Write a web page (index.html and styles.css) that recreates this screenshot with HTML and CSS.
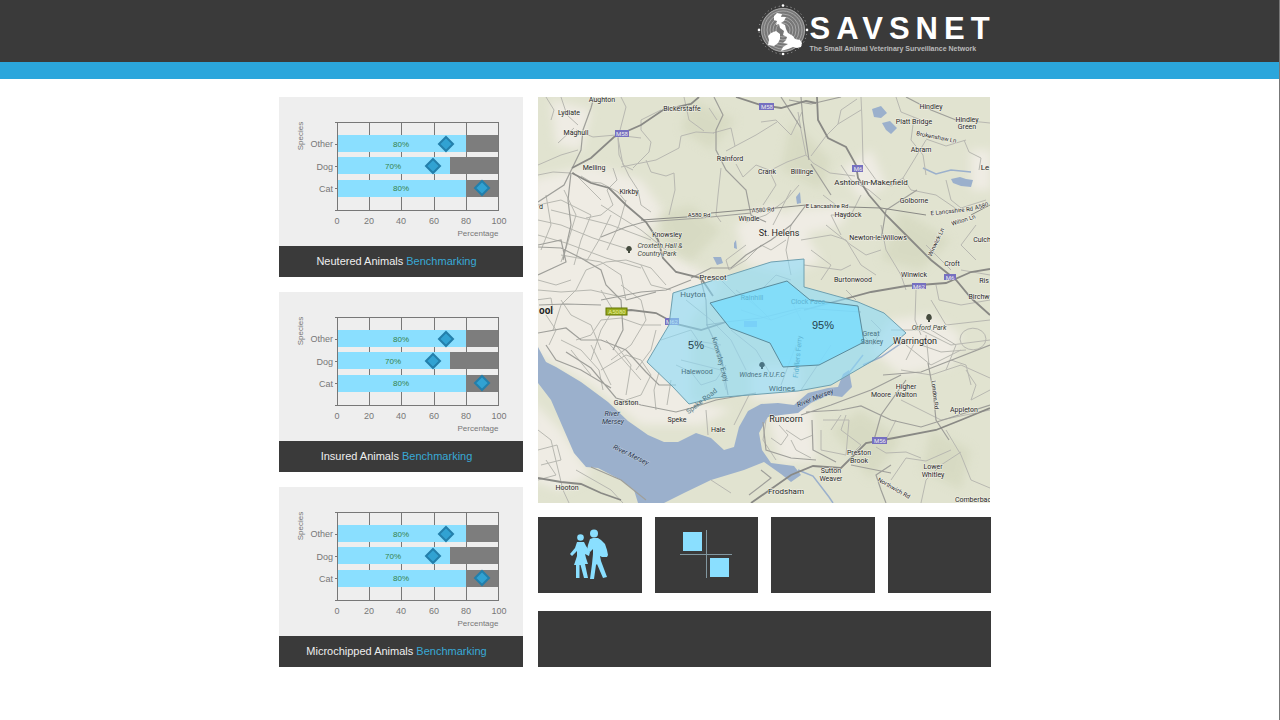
FILE: index.html
```html
<!DOCTYPE html>
<html lang="en">
<head>
<meta charset="utf-8">
<meta name="viewport" content="width=device-width, initial-scale=1">
<title>SAVSNET</title>
<link rel="stylesheet" href="styles.css">
</head>
<body>
<header class="site-header">
  <div class="wrap brand">
    <svg class="brand-mark" viewBox="0 0 52 52" aria-hidden="true">
      <circle cx="26" cy="26" r="22" fill="#777"/>
      <g fill="none" stroke="#a8a8a8" stroke-width="1">
        <circle cx="26" cy="26" r="21.500"/><circle cx="26" cy="26" r="19"/><circle cx="26" cy="26" r="16"/><circle cx="26" cy="26" r="13"/><circle cx="26" cy="26" r="10"/><circle cx="26" cy="26" r="7"/>
      </g>
      <circle cx="26" cy="26" r="24" fill="none" stroke="#aaa" stroke-width="1" stroke-dasharray="1 3"/>
      <g fill="#fff"><circle cx="26" cy="1.500" r="1.300"/><circle cx="26" cy="50" r="1.300"/><circle cx="2" cy="26" r="1.300"/><circle cx="50" cy="26" r="1.300"/></g>
      <path fill="#fff" d="M17 12l3-3 5 1-1 3 5 0-2 4-3 2 4 2 1 4 2 4 5 3 2 3 5 1 2 3-1 4-4 1-4-1-5 2-7 2 2-4 5-3-5-1 3-3 1-3-4-2 1-4-4-3-1-4-3 1 1-4-3-1zM14 29l5-2 4 3 0 5-2 4-4 3-6-1 1-5-1-4z"/>
    </svg>
    <div class="brand-text">
      <div class="brand-name">SAVSNET</div>
      <div class="brand-tag">The Small Animal Veterinary Surveillance Network</div>
    </div>
  </div>
</header>
<div class="accent"></div>
<main class="wrap board">
  <div class="charts">
    <section class="card">
      <svg class="chart" viewBox="0 0 244 149" role="img" aria-label="Neutered animals by species">
        <g class="grid"><path d="M58.500 25V114M90.500 25V114M122.500 25V114M155.500 25V114M187.500 25V114M219.500 25V114M56 25.500H219M56 47.500H58M56 69.500H58M56 91.500H58M56 113.500H219"/></g>
        <g class="rest"><path d="M187 38h32v17h-32zM171 60h48v17h-48zM187 83h32v17h-32z"/></g>
        <g class="bar"><path d="M59 38h128v17H59zM59 60h112v17H59zM59 83h128v17H59z"/></g>
        <g class="mark"><path d="M167 40l7 7-7 7-7-7zM154 62l7 7-7 7-7-7zM203 84l7 7-7 7-7-7z"/></g>
        <g class="value"><text x="122" y="50">80%</text><text x="114" y="72">70%</text><text x="122" y="94">80%</text></g>
        <g class="cat"><text x="54" y="50">Other</text><text x="54" y="73">Dog</text><text x="54" y="95">Cat</text></g>
        <g class="tick"><text x="58" y="127">0</text><text x="90" y="127">20</text><text x="122" y="127">40</text><text x="155" y="127">60</text><text x="187" y="127">80</text><text x="220" y="127">100</text></g>
        <text class="axis" x="199" y="139">Percentage</text>
        <text class="axis" transform="translate(24 39) rotate(-90)">Species</text>
      </svg>
      <h2 class="caption">Neutered Animals <span>Benchmarking</span></h2>
    </section>
    <section class="card">
      <svg class="chart" viewBox="0 0 244 149" role="img" aria-label="Insured animals by species">
        <g class="grid"><path d="M58.500 25V114M90.500 25V114M122.500 25V114M155.500 25V114M187.500 25V114M219.500 25V114M56 25.500H219M56 47.500H58M56 69.500H58M56 91.500H58M56 113.500H219"/></g>
        <g class="rest"><path d="M187 38h32v17h-32zM171 60h48v17h-48zM187 83h32v17h-32z"/></g>
        <g class="bar"><path d="M59 38h128v17H59zM59 60h112v17H59zM59 83h128v17H59z"/></g>
        <g class="mark"><path d="M167 40l7 7-7 7-7-7zM154 62l7 7-7 7-7-7zM203 84l7 7-7 7-7-7z"/></g>
        <g class="value"><text x="122" y="50">80%</text><text x="114" y="72">70%</text><text x="122" y="94">80%</text></g>
        <g class="cat"><text x="54" y="50">Other</text><text x="54" y="73">Dog</text><text x="54" y="95">Cat</text></g>
        <g class="tick"><text x="58" y="127">0</text><text x="90" y="127">20</text><text x="122" y="127">40</text><text x="155" y="127">60</text><text x="187" y="127">80</text><text x="220" y="127">100</text></g>
        <text class="axis" x="199" y="139">Percentage</text>
        <text class="axis" transform="translate(24 39) rotate(-90)">Species</text>
      </svg>
      <h2 class="caption">Insured Animals <span>Benchmarking</span></h2>
    </section>
    <section class="card">
      <svg class="chart" viewBox="0 0 244 149" role="img" aria-label="Microchipped animals by species">
        <g class="grid"><path d="M58.500 25V114M90.500 25V114M122.500 25V114M155.500 25V114M187.500 25V114M219.500 25V114M56 25.500H219M56 47.500H58M56 69.500H58M56 91.500H58M56 113.500H219"/></g>
        <g class="rest"><path d="M187 38h32v17h-32zM171 60h48v17h-48zM187 83h32v17h-32z"/></g>
        <g class="bar"><path d="M59 38h128v17H59zM59 60h112v17H59zM59 83h128v17H59z"/></g>
        <g class="mark"><path d="M167 40l7 7-7 7-7-7zM154 62l7 7-7 7-7-7zM203 84l7 7-7 7-7-7z"/></g>
        <g class="value"><text x="122" y="50">80%</text><text x="114" y="72">70%</text><text x="122" y="94">80%</text></g>
        <g class="cat"><text x="54" y="50">Other</text><text x="54" y="73">Dog</text><text x="54" y="95">Cat</text></g>
        <g class="tick"><text x="58" y="127">0</text><text x="90" y="127">20</text><text x="122" y="127">40</text><text x="155" y="127">60</text><text x="187" y="127">80</text><text x="220" y="127">100</text></g>
        <text class="axis" x="199" y="139">Percentage</text>
        <text class="axis" transform="translate(24 39) rotate(-90)">Species</text>
      </svg>
      <h2 class="caption">Microchipped Animals <span>Benchmarking</span></h2>
    </section>
  </div>
  <div class="side">
    <svg class="map" viewBox="537 97 452 406" preserveAspectRatio="xMidYMid slice" role="img" aria-label="Map of Merseyside">
      <defs>
        <filter id="soft" x="-20%" y="-20%" width="140%" height="140%"><feGaussianBlur stdDeviation="5"/></filter>
      </defs>
      <rect x="530" y="90" width="466" height="420" fill="#e1e3d0"/>
      <!-- built-up areas -->
      <g fill="#efece4" filter="url(#soft)">
        <path d="M530 180L590 165 640 180 665 215 640 240 690 265 720 285 690 320 690 400 730 410 700 425 640 425 590 385 530 350z"/>
        <path d="M735 225L770 205 800 225 820 260 790 275 745 265z"/>
        <path d="M840 170L870 150 885 185 860 200zM890 320L930 315 960 335 950 365 900 375 870 350z"/>
        <path d="M765 410L810 405 815 460 780 462zM530 400L560 430 590 475 560 490 530 480zM550 100L590 110 580 150 555 145zM970 150h20v40h-20zM785 210L850 205 840 225 800 235zM750 365h50v35h-50z"/>
      </g>
      <g fill="#cfd3b7" opacity=".5" filter="url(#soft)">
        <path d="M655 215L690 205 720 230 690 262 670 250zM690 100L735 120 710 150 680 130zM790 120L830 160 820 190 780 170zM900 210L950 240 920 270 880 260zM830 430L860 410 900 440 870 480zM930 430L970 450 960 490 920 470z"/>
      </g>
      <!-- rivers and lakes -->
      <g fill="#9bb0cc">
        <path d="M537 347L545 362 555 367 580 382 607 402 627 421 647 435 663 442 677 442 695 433 710 438 723 450 733 447 738 427 747 411 760 404 777 403 793 405 807 393 827 388 837 387 842 374 848 370 851 387 841 397 827 395 810 403 797 413 780 415 767 417 758 433 761 450 770 463 793 466 800 475 790 482 780 474 763 462 743 470 710 480 683 493 663 503 637 503 633 490 620 480 597 468 585 467 573 453 563 430 550 400 537 383z"/>
        <path d="M871 109l9-3 6 7-6 5-7-1zM881 123l8-2 7 7-6 6-5-4zM950 179l9-2 6 2 7 1-2 7-10-1-8-3zM795 197l4-5 1 11-4 1zM712 257l8 0 2 6-6 2zM733 243l2-3 1 9-3-1z"/>
      </g>
      <path d="M862 355L848 373M797 470L812 476 828 497 832 503M905 340L880 357 862 365M922 168L935 174 950 170 970 172" fill="none" stroke="#9bb0cc" stroke-width="1.500"/>
      <!-- local streets -->
      <g fill="none" stroke="#b8b8b1" stroke-width="1">
        <path d="M545 97L553 110 550 120M560 97L566 115 577 125M573 128L557 143M620 97L625 107 617 138 622 165 632 170M632 168L648 152 650 142 640 130 640 120 660 110M575 130L592 137 615 135 640 138M617 138L618 155 628 176 637 190 640 205 650 212M620 167L655 160 678 148 680 136 695 132 713 133M683 97L688 120 703 131M708 108L716 120M712 133L730 128 734 146M725 151L755 135 776 122M645 160L650 172 665 176 673 173 674 190 668 215M720 168L717 195 715 215 720 222M735 164L742 177 755 165 768 170M768 170L775 185 762 205M612 168L616 180 606 190 612 205 600 215 585 218M572 172L590 190 600 200M537 175L552 172 570 173M537 165L560 155 577 150M580 176L590 182 600 183 617 192 625 202"/>
        <path d="M760 122L775 120 790 135 801 112M797 112L800 130 805 155 812 163 829 173 854 176M810 156L825 136 837 124 860 110M837 124L840 110 856 99M860 97L861 120 862 162M862 162L875 180 890 186 902 178 913 160 925 140M895 97L900 112 920 120M913 117L910 140 922 155 925 175M925 139L945 146 965 140M960 120L989 123M963 140L968 152 980 158 978 170M902 178L910 190 935 195 957 210M945 180L950 200 960 208 985 200M840 165L850 180 868 190 880 200M790 190L772 225M822 195L835 205M805 155L786 162 770 170M798 185L785 200 765 215 745 222M860 195L850 215 830 215 840 235"/>
        <path d="M537 205L560 200 590 215M545 195L550 225 540 250M563 190L575 215 566 245 560 262M590 215L580 240 573 265M610 215L598 240 585 262M625 200L618 225 606 250M537 220L560 225 592 238 630 250M537 235L565 243 605 258 640 268M550 210L610 225 650 240M600 205L640 230 665 250M560 255L600 262 620 275 625 300M575 290L585 270 605 262 625 260 650 268 665 285M552 330L560 305 575 290M560 300L570 315 590 325 600 350M537 290L560 292 590 290 625 298M537 280L555 285 570 280M600 290L612 310 600 330 590 360M620 285L640 300 645 320 630 345 610 360M640 265L650 285 670 290M575 340L590 335 600 320 620 318 640 325 660 325M545 315L555 330 548 345M560 340L580 350 598 370 602 390M600 370L625 355 640 360M615 345L630 365 625 395M640 360L650 375 640 395 625 400M590 345L610 385M570 350L590 375M605 340L640 380M535 300L550 298 552 310 540 312M655 330L650 350 635 370M658 372L653 390 655 410M670 380L666 405M725 365L715 380 700 385 690 372 675 365M660 340L690 330 700 345 715 350"/>
        <path d="M720 280L735 295 760 290 775 275 790 280M745 245L725 260 728 270 745 260 760 245 770 250 785 240M790 225L785 250 790 275M800 240L830 235 845 240 860 265 875 275M825 225L850 245 865 255 880 250M810 250L830 265 820 280M803 265L840 270 850 265M880 225L885 250 900 275 905 290M915 290L914 320 920 335M845 290L855 300M935 285L938 300 960 305 989 300M960 270L989 275M925 245L950 270M975 225L960 245 975 260M930 300L945 325 989 320M890 330L920 330 950 345 989 340M905 345L930 365 960 350M915 340L905 360M930 330L955 345 945 370M960 335a12 10 0 1 0 24 8a12 10 0 1 0-24-8M900 370L930 375 960 365 989 378M950 360L965 365 970 385M920 345L940 352 965 350M925 335L928 365"/>
        <path d="M685 300L710 320 730 340 745 370M730 330L755 350 770 375M750 300L770 320 800 310M770 320L740 310M800 320L790 300M795 345L780 385M830 345L800 390M870 320L880 330 872 345 862 335M735 290L760 310M690 340L720 345M680 360L720 370 725 390"/>
        <path d="M705 410L707 435M733 425L748 395M537 450L556 445 560 460 540 465M537 430L550 440 562 490M545 460L555 475 537 480M575 470L610 490 622 503M562 490L568 503M710 480L730 493M765 420L762 440 775 460M778 425L787 435 780 445 770 438M785 430L800 440 812 435M790 440L795 450 810 458M845 415L840 430 860 445 850 455M830 430L840 415M875 447L885 453 905 452 920 458M890 480L905 458 925 461 950 450M920 503L925 480 940 465 960 452M945 430L960 455 970 480 989 488M895 420L885 440M900 400L940 420 989 410M965 370L975 385 970 400 989 390M822 420L848 420 845 455 820 450 820 430"/>
      </g>
      <!-- main roads -->
      <g fill="none" stroke="#9f9f9a" stroke-width="1.200">
        <path d="M537 202L563 185 580 150 582 130 590 108 593 97M570 173L567 200 570 225 562 260M713 97L722 115 715 130 715 150 725 170 745 190 750 215 765 222M600 237L625 227 643 222 700 218 750 213M800 97L802 120 808 160M788 100L810 104 840 97M780 97L800 128M810 164L830 195M537 247L560 248 580 258 600 270 605 285 620 300 622 330 612 350M537 275L565 262 560 240 537 245M538 305L565 304 600 305M600 300L640 292 665 290 690 280M625 300L655 292M537 333L565 328 580 340 600 340 625 350 645 372 658 385 675 385M565 352L590 368 615 398 640 405 675 412 690 408 715 400 755 393M700 280L705 300 706 325 720 355 727 395M705 325L725 322 760 318 800 308 860 312M545 345L555 360 580 370 610 388M690 278L710 268 730 268 745 255 770 240 790 225 805 205M905 97L930 110 960 122M916 190L885 210 880 240M927 363L932 390 935 420 948 440M882 375L920 372 989 345M800 415L830 405 870 390 900 375M805 412L840 410 860 406 890 420 920 427 989 405M905 380L880 415 873 440M762 422L765 450 790 458 815 460M811 420L812 450 835 462M890 465L875 475 880 490 885 503M890 473L850 465M590 467L620 480 645 500M748 495L770 478 760 470"/>
      </g>
      <!-- motorways -->
      <g fill="none" stroke="#898985" stroke-width="1.800">
        <path d="M571 168L590 158 613 137 640 125 662 110 690 104 698 97M571 173L590 183 608 188 625 205 645 222 657 240 662 258 675 272 700 278 712 296"/>
        <path d="M735 97L760 105 780 108 805 101 815 103M816 97L817 120 827 138 845 147 855 165 857 178 868 195 885 215 905 235 930 260 955 280 970 298 989 315"/>
        <path d="M605 312L630 310 655 313 675 324 700 330 725 322M803 310L840 300 870 292 905 286 945 283 970 272 989 269"/>
        <path d="M750 503L790 475 812 466 840 468 865 443 893 438 935 430 960 420 989 408"/>
        <path d="M537 478L560 482 580 484 600 493 620 500"/>
        <path stroke-width="1" d="M640 220L700 216M710 213L755 209M765 209L805 205M848 207L880 208 925 215M970 215L989 205"/>
      </g>
      <!-- route shields -->
      <g fill="#7670c0"><rect x="614" y="130" width="14" height="7"/><rect x="758" y="103" width="15" height="7"/><rect x="851" y="165" width="11" height="7"/><rect x="664" y="318" width="14" height="7"/><rect x="911" y="283" width="14" height="6"/><rect x="943" y="274" width="12" height="6"/><rect x="871" y="437" width="15" height="7"/><rect x="743" y="321" width="13" height="6"/></g>
      <rect x="605" y="308" width="21" height="7" fill="#9bad20" stroke="#627500" stroke-width="1"/>
      <g class="shield"><text x="621" y="136">M58</text><text x="766" y="109">M58</text><text x="857" y="171">M6</text><text x="671" y="324">M62</text><text x="918" y="289">M62</text><text x="949" y="280">M6</text><text x="879" y="443">M56</text><text class="dark" x="616" y="314">A5080</text></g>
      <!-- place names -->
      <g class="place">
        <text x="601" y="102">Aughton</text><text x="568" y="115">Lydiate</text><text x="575" y="135">Maghull</text><text x="681" y="111">Bickerstaffe</text><text x="593" y="170">Melling</text><text x="628" y="194">Kirkby</text><text x="729" y="161">Rainford</text><text x="766" y="174">Crank</text><text x="801" y="174">Billinge</text><text x="930" y="109">Hindley</text><text x="913" y="124">Platt Bridge</text><text x="966" y="122">Hindley</text><text x="966" y="129">Green</text><text x="920" y="152">Abram</text><text x="913" y="203">Golborne</text><text x="847" y="217">Haydock</text><text x="748" y="221">Windle</text><text x="877" y="240">Newton-le-Willows</text><text x="666" y="237">Knowsley</text><text x="951" y="266">Croft</text><text x="913" y="277">Winwick</text><text x="852" y="282">Burtonwood</text><text x="981" y="242">Culch</text><text x="983" y="283">Ris</text><text x="978" y="299">Birchw</text><text x="625" y="405">Garston</text><text x="676" y="422">Speke</text><text x="717" y="432">Hale</text><text x="566" y="490">Hooton</text><text x="880" y="397">Moore</text><text x="905" y="389">Higher</text><text x="905" y="397">Walton</text><text x="963" y="412">Appleton</text><text x="858" y="455">Preston</text><text x="858" y="463">Brook</text><text x="830" y="473">Sutton</text><text x="830" y="481">Weaver</text><text x="932" y="469">Lower</text><text x="932" y="477">Whitley</text><text x="972" y="502">Comberbac</text>
        <text x="540" y="209">d</text>
      </g>
      <g class="place town">
        <text x="870" y="185">Ashton-in-Makerfield</text><text x="785" y="494">Frodsham</text><text x="984" y="170">Le</text>
      </g>
      <g class="place city"><text x="778" y="236">St. Helens</text><text x="785" y="422">Runcorn</text><text class="bold" x="545" y="314">ool</text></g>
      <g class="place park"><text x="659" y="248">Croxteth Hall &amp;</text><text x="656" y="256">Country Park</text><text x="928" y="330">Orford Park</text></g>
      <g fill="#454b3e"><path d="M628 246c3 0 4 5 1 5v2h-2v-2c-3 0-2-5 1-5zM928 314c3 0 4 6 1 6v2h-2v-2c-3 0-2-6 1-6z"/></g>
      <g class="place water"><text x="611" y="416">River</text><text x="612" y="424">Mersey</text><text transform="translate(629 457) rotate(26)">River Mersey</text><text transform="translate(815 400) rotate(-22)">River Mersey</text></g>
      <g class="place road">
        <text x="698" y="217">A580 Rd</text><text transform="translate(762 212) rotate(-3)">A580 Rd</text><text x="826" y="208">E Lancashire Rd</text><text transform="translate(951 213) rotate(-6)">E Lancashire Rd</text><text transform="translate(981 208) rotate(-14)">A580</text><text transform="translate(963 222) rotate(-18)">Wilton Ln</text><text transform="translate(935 139) rotate(11)">Brokenshaw Ln</text><text transform="translate(937 243) rotate(-65)">Winwick Ln</text><text transform="translate(932 395) rotate(84)">London Rd</text><text transform="translate(892 490) rotate(30)">Northwich Rd</text>
      </g>
      <!-- catchment areas -->
      <path d="M672 293L770 262 803 259V287L857 302 883 313 905 333 873 360 830 385 797 391 712 398 688 404 672 387 646 362 668 325z" fill="#8bdaf8" fill-opacity=".6" stroke="#6fa0b0" stroke-width="1"/>
      <path d="M709 303L786 281 809 300 857 306 863 342 818 365 782 367 769 343 729 328z" fill="#75dcff" fill-opacity=".75" stroke="#5a8b9c" stroke-width="1"/>
      <g class="place city"><text x="914" y="344">Warrington</text></g>
      <g class="place town"><text x="712" y="280">Prescot</text></g>
      <g class="under">
        <text class="large" x="692" y="297">Huyton</text><text class="large" x="781" y="391">Widnes</text><text x="696" y="374">Halewood</text><text class="faint" x="751" y="300">Rainhill</text><text class="faint" x="807" y="304">Clock Face</text><text x="870" y="336">Great</text><text x="871" y="344">Sankey</text><text class="slant" x="761" y="377">Widnes R.U.F.C</text>
        <text transform="translate(702 403) rotate(-38)">Speke Road</text><text transform="translate(717 360) rotate(74)">Knowsley Expy</text><text class="faint" transform="translate(799 357) rotate(-84)">Fiddlers Ferry</text>
        <path d="M761 362c3 0 4 5 1 5v2h-2v-2c-3 0-2-5 1-5z"/>
      </g>
      <g class="share"><text x="695" y="349">5%</text><text x="822" y="329">95%</text></g>
    </svg>
    <div class="tiles">
      <button class="tile" type="button" aria-label="Owners">
        <svg width="40" height="52" viewBox="0 0 40 52" fill="#8adfff" aria-hidden="true">
          <circle cx="10.500" cy="8.500" r="3.300"/><circle cx="24" cy="4.500" r="4"/>
          <path d="M7 13h7l2 4 4 6-1 4-4-2 1 4 2 6h-3l3 14h-4l-3.500-13h-1L9.500 49H6V36H4l3-9v-5l-5 5-2-2 5-6z"/>
          <path d="M20 10l3-1h5l3 2 4 4 2 6 1 5-1 2h-5l-2-1 1 5 6 16-4 1-6-14-1 1-2 14h-4l2-15 1-10v-5l-3 3-3-2 1-5z"/>
        </svg>
      </button>
      <button class="tile" type="button" aria-label="Grid">
        <svg width="52" height="50" viewBox="0 0 52 50" aria-hidden="true">
          <path d="M26.500 0V48M0 24.500H52" stroke="#8197a0" stroke-width="1"/>
          <path d="M3 2h19v19H3zM30 28h19v19H30z" fill="#8adfff"/>
        </svg>
      </button>
      <button class="tile" type="button" aria-label="Empty slot one"></button>
      <button class="tile" type="button" aria-label="Empty slot two"></button>
    </div>
    <div class="panel"></div>
  </div>
</main>
</body>
</html>
```
FILE: styles.css
```css
* { box-sizing: border-box; }
body {
  margin: 0;
  background: #fff;
  font-family: "Liberation Sans", Arial, sans-serif;
  border-right: 1px solid #777;
  min-height: 100vh;
}
.site-header, .accent, .board { padding-right: 9px; }
.wrap { max-width: 721px; margin: 0 auto; }
.site-header { background: #3a3a3a; }
.brand {
  display: flex;
  justify-content: flex-end;
  align-items: center;
  padding: 0 5px 2px 0;
  height: 62px;
  gap: 1px;
}
.brand-mark { width: 52px; height: 52px; }
.brand-text { width: 181px; padding-top: 5px; color: #fff; }
.brand-name {
  font-size: 31px;
  line-height: 32px;
  font-weight: 700;
  letter-spacing: 6px;
  white-space: nowrap;
}
.brand-tag {
  font-size: 7px;
  line-height: 8px;
  font-weight: 700;
  color: #bbb;
  white-space: nowrap;
}
.accent { height: 17px; background: #2ba6dc; }
.board {
  display: grid;
  grid-template-columns: minmax(0, 244fr) minmax(0, 453fr);
  column-gap: 15px;
  padding-top: 18px;
  padding-bottom: 18px;
}
.charts { display: flex; flex-direction: column; gap: 15px; }
.card { background: #eee; }
.chart { display: block; width: 100%; height: auto; }
.caption {
  margin: 0;
  background: #3a3a3a;
  color: #eee;
  font-size: 11px;
  line-height: 31px;
  font-weight: 400;
  text-align: center;
  padding-right: 9px;
}
.caption span { color: #38a9d6; }
.grid path { stroke: #777; stroke-width: 1; fill: none; }
.rest path { fill: #7d7d7d; }
.bar path { fill: #8adfff; }
.mark path { fill: #31a2d2; stroke: #237fab; stroke-width: 2; }
.value text { font-size: 8px; text-anchor: middle; fill: #35824a; }
.cat text { font-size: 9px; text-anchor: end; fill: #777; }
.tick text { font-size: 9px; text-anchor: middle; fill: #777; }
.axis { font-size: 8px; text-anchor: middle; fill: #777; }

.side { display: flex; flex-direction: column; }
.map { display: block; width: 100%; height: auto; padding-right: 1px; }
.place text, .under text {
  font-family: Roboto, "Noto Sans", sans-serif;
  font-size: 7px;
  font-weight: 400;
  text-anchor: middle;
}
.place text {
  fill: #1f1f1f;
  stroke: #f3f2e9;
  stroke-width: 1px;
  paint-order: stroke;
}
.town text, .under .large { font-size: 8px; }
.city text { font-size: 9px; }
.city .bold { font-size: 10px; font-weight: 700; }
.park text { font-style: italic; fill: #40463c; }
.water text { fill: #26324c; font-style: italic; stroke: #bccbdc; }
.road text { font-size: 6px; }
.under text, .under path { fill: #4b7382; }
.under .faint { fill: #5fb4d3; }
.under .slant { font-style: italic; }
.shield text {
  font-family: Roboto, sans-serif;
  font-size: 6px;
  text-anchor: middle;
  fill: #eee;
}
.shield .dark { fill: #e5ee9a; }
.share text { font-size: 11px; text-anchor: middle; fill: #23414d; }
.tiles {
  display: grid;
  grid-template-columns: repeat(4, minmax(0, 1fr));
  gap: 13px;
  margin: 14px 0 18px;
}
.tile {
  display: flex;
  align-items: center;
  justify-content: center;
  height: 76px;
  padding: 0;
  border: 0;
  background: #3a3a3a;
}
.panel { height: 56px; background: #3a3a3a; }
@media (max-width: 700px) {
  .board { grid-template-columns: minmax(0, 1fr); row-gap: 15px; padding-left: 9px; }
}
```
